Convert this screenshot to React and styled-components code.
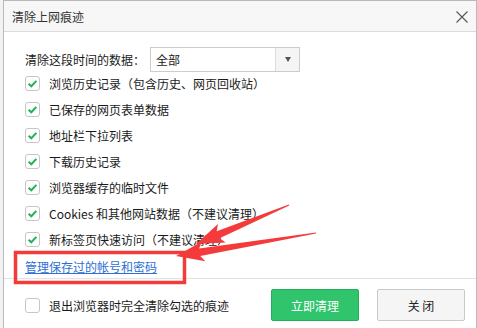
import React from "react";
import styled, { createGlobalStyle } from "styled-components";

const GlobalStyle = createGlobalStyle`
  html, body {
    margin: 0;
    padding: 0;
    background: #f2f2f2;
  }
  body {
    font-family: "Noto Sans CJK SC", "Liberation Sans", sans-serif;
    font-size: 12px;
    color: #1a1a1a;
  }
`;

const items = [
  "浏览历史记录（包含历史、网页回收站）",
  "已保存的网页表单数据",
  "地址栏下拉列表",
  "下载历史记录",
  "浏览器缓存的临时文件",
  "Cookies 和其他网站数据（不建议清理）",
  "新标签页快速访问（不建议清理）",
];

// tapered marker-style arrow, from tail to tip
const arrowPoints = (tx, ty, px, py) => {
  const dx = px - tx;
  const dy = py - ty;
  const len = Math.hypot(dx, dy);
  const ux = dx / len;
  const uy = dy / len;
  const nx = -uy;
  const ny = ux;
  const headLen = 24;
  const headW = 10;
  const bx = px - ux * headLen;
  const by = py - uy * headLen;
  const pts = [
    [tx + nx * 0.6, ty + ny * 0.6],
    [bx + nx * 3.8, by + ny * 3.8],
    [bx - ux * 4 + nx * headW, by - uy * 4 + ny * headW],
    [px, py],
    [bx - ux * 4 - nx * headW, by - uy * 4 - ny * headW],
    [bx - nx * 3.8, by - ny * 3.8],
    [tx - nx * 0.6, ty - ny * 0.6],
  ];
  return pts.map((p) => p.map((v) => v.toFixed(1)).join(",")).join(" ");
};

const App = () => {
  return (
    <>
      <GlobalStyle />
      <Page>
        <Dialog>
          <TitleBar>
            <Title>清除上网痕迹</Title>
            <CloseIcon viewBox="0 0 12 12">
              <path d="M0.5 0.5 L11.5 11.5 M11.5 0.5 L0.5 11.5" />
            </CloseIcon>
          </TitleBar>
          <Body>
            <TimeRow>
              <Label>清除这段时间的数据：</Label>
              <Select>
                <SelectValue>全部</SelectValue>
                <SelectButton>
                  <Caret />
                </SelectButton>
              </Select>
            </TimeRow>
            <CheckList>
              {items.map((text) => (
                <CheckRow key={text}>
                  <Box>
                    <CheckMark viewBox="0 0 13 13">
                      <path d="M2.6 6.8 L5.3 9.3 L10.4 3.9" />
                    </CheckMark>
                  </Box>
                  <span>{text}</span>
                </CheckRow>
              ))}
            </CheckList>
            <LinkRow>
              <ManageLink href="#">管理保存过的帐号和密码</ManageLink>
            </LinkRow>
          </Body>
          <Footer>
            <CheckRow>
              <Box />
              <span>退出浏览器时完全清除勾选的痕迹</span>
            </CheckRow>
            <Buttons>
              <Button $primary>立即清理</Button>
              <Button>关 闭</Button>
            </Buttons>
          </Footer>
        </Dialog>
        <Annotations viewBox="0 0 477 328">
          <rect x="15.5" y="252.5" width="169" height="30" />
          <polygon points={arrowPoints(289, 205, 196, 244)} />
          <polygon points={arrowPoints(316, 233, 176, 256)} />
        </Annotations>
      </Page>
    </>
  );
};

const Page = styled.div`
  position: relative;
  width: 477px;
  height: 328px;
  overflow: hidden;
`;

const Dialog = styled.div`
  box-sizing: border-box;
  margin-left: 3px;
  width: 474px;
  height: 360px;
  background: #fff;
  border: 1px solid #b9b9b9;
`;

const TitleBar = styled.div`
  box-sizing: border-box;
  height: 31px;
  display: flex;
  align-items: center;
  justify-content: space-between;
  padding: 0 8px 0 8px;
  background: #f7f7f7;
  border-bottom: 1px solid #dcdcdc;
`;

const Title = styled.span`
  color: #333;
  font-size: 12px;
`;

const CloseIcon = styled.svg`
  width: 12px;
  height: 12px;
  margin-top: 2px;
  fill: none;
  stroke: #555;
  stroke-width: 1.1;
`;

const Body = styled.div`
  padding: 15px 12px 0 21px;
`;

const TimeRow = styled.div`
  display: flex;
  align-items: center;
  height: 25px;
`;

const Label = styled.span`
  width: 125px;
`;

const Select = styled.div`
  box-sizing: border-box;
  width: 150px;
  height: 25px;
  display: flex;
  border: 1px solid #cccccc;
  background: #fff;
`;

const SelectValue = styled.span`
  flex: 1;
  padding-left: 5px;
  line-height: 23px;
`;

const SelectButton = styled.span`
  width: 23px;
  display: flex;
  align-items: center;
  justify-content: center;
  background: #f5f5f5;
  border-left: 1px solid #dcdcdc;
`;

const Caret = styled.span`
  width: 0;
  height: 0;
  border-top: 5px solid #555;
  border-left: 3.5px solid transparent;
  border-right: 3.5px solid transparent;
`;

const CheckList = styled.div`
  margin-top: -2px;
`;

const CheckRow = styled.label`
  display: flex;
  align-items: center;
  gap: 9px;
  height: 26px;
`;

const Box = styled.span`
  box-sizing: border-box;
  width: 15px;
  height: 15px;
  flex-shrink: 0;
  display: flex;
  align-items: center;
  justify-content: center;
  border: 1px solid #c6c6c6;
  border-radius: 3px;
  background: #fff;
`;

const CheckMark = styled.svg`
  width: 13px;
  height: 13px;
  fill: none;
  stroke: #22b35a;
  stroke-width: 2;
`;

const LinkRow = styled.div`
  height: 26px;
  display: flex;
  align-items: center;
  padding-top: 2px;
  box-sizing: border-box;
`;

const ManageLink = styled.a`
  color: #2d6fd2;
  text-decoration: underline;
`;

const Footer = styled.div`
  display: flex;
  align-items: center;
  justify-content: space-between;
  padding: 10px 11px 0 21px;
  border-top: 1px solid #e3e3e3;
`;

const Buttons = styled.div`
  display: flex;
  gap: 18px;
`;

const Button = styled.button`
  box-sizing: border-box;
  width: 88px;
  height: 32px;
  font-family: inherit;
  font-size: 12px;
  border-radius: 2px;
  border: 1px solid ${(p) => (p.$primary ? "#25ad5d" : "#c9c9c9")};
  background: ${(p) => (p.$primary ? "#30c46c" : "#f5f5f5")};
  color: ${(p) => (p.$primary ? "#fff" : "#222")};
`;

const Annotations = styled.svg`
  position: absolute;
  left: 0;
  top: 0;
  width: 477px;
  height: 328px;
  pointer-events: none;
  rect {
    fill: none;
    stroke: #f23b3b;
    stroke-width: 3.5;
  }
  polygon {
    fill: #f43a3a;
  }
`;

export default App;
